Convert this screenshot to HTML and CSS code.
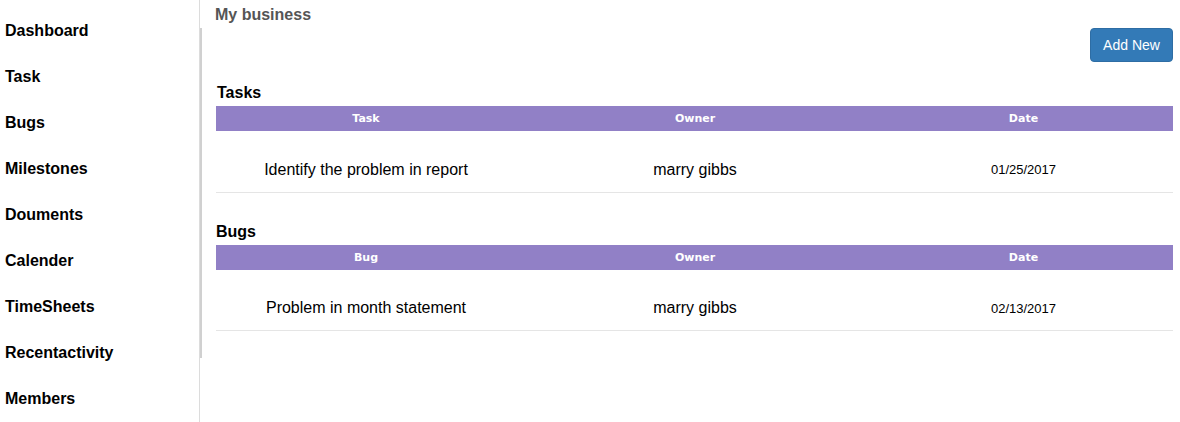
FILE: index.html
```html
<!DOCTYPE html>
<html>
<head>
<meta charset="utf-8">
<link rel="stylesheet" href="styles.css">
</head>
<body>
<div class="app">
  <nav class="sidebar">
    <ul class="nav">
      <li>Dashboard</li>
      <li>Task</li>
      <li>Bugs</li>
      <li>Milestones</li>
      <li>Douments</li>
      <li>Calender</li>
      <li>TimeSheets</li>
      <li>Recentactivity</li>
      <li>Members</li>
    </ul>
  </nav>
  <main class="main">
    <div class="title">My business</div>
    <div class="toolbar"><button class="btn">Add New</button></div>
    <section class="block block-tasks">
      <h2 class="block-title">Tasks</h2>
      <table class="grid">
        <thead><tr><th class="c1">Task</th><th class="c2">Owner</th><th class="c3">Date</th></tr></thead>
        <tbody><tr><td class="c1">Identify the problem in report</td><td class="c2">marry gibbs</td><td class="c3 date">01/25/2017</td></tr></tbody>
      </table>
    </section>
    <section class="block block-bugs">
      <h2 class="block-title">Bugs</h2>
      <table class="grid">
        <thead><tr><th class="c1">Bug</th><th class="c2">Owner</th><th class="c3">Date</th></tr></thead>
        <tbody><tr><td class="c1">Problem in month statement</td><td class="c2">marry gibbs</td><td class="c3 date">02/13/2017</td></tr></tbody>
      </table>
    </section>
  </main>
</div>
</body>
</html>
```
FILE: styles.css
```css
html, body { margin: 0; padding: 0; background: #fff; }
body { font-family: "Liberation Sans", Arial, sans-serif; color: #000; }
.app { display: flex; height: 422px; overflow: hidden; }
.sidebar { width: 199px; flex: none; border-right: 1px solid #dcdcdc; }
.nav { list-style: none; margin: 0; padding: 8px 0 0 0; }
.nav li { font-size: 16px; font-weight: bold; line-height: 46px; height: 46px; padding-left: 5px; }
.main { flex: 1; position: relative; padding: 0 7px 0 16px; }
.main::before { content: ""; position: absolute; left: 0; top: 28px; width: 2px; height: 330px; background: #d0d0d0; }
.title { font-size: 16px; font-weight: bold; color: #555; line-height: 18px; padding-top: 6px; margin-left: -1px; }
.toolbar { display: flex; justify-content: flex-end; margin-top: 4px; }
.btn { background: #337ab7; border: 1px solid #2e6da4; color: #fff; font-family: "Liberation Sans", Arial, sans-serif; font-size: 14px; height: 34px; width: 83px; padding: 0; border-radius: 4px; line-height: 32px; }
.block-title { font-size: 16px; font-weight: bold; margin: 0; line-height: 18px; }
.block-tasks { margin-top: 22px; }
.block-tasks .block-title { padding-left: 1px; }
.block-bugs { margin-top: 30px; }
.grid { width: 957px; border-collapse: collapse; margin-top: 4px; }
.grid th { background: #9180c6; color: #fff; font-family: "DejaVu Sans", Verdana, sans-serif; font-size: 11px; font-weight: bold; height: 25px; padding: 0; text-align: center; }
.grid td { height: 61px; padding: 0; text-align: center; font-size: 16px; border-bottom: 1px solid #e5e5e5; padding-top: 17px; box-sizing: border-box; }
.grid td.date { font-size: 13px; }
.c1 { width: 300px; }
.c2 { width: 358px; }
.c3 { width: 299px; }
```
